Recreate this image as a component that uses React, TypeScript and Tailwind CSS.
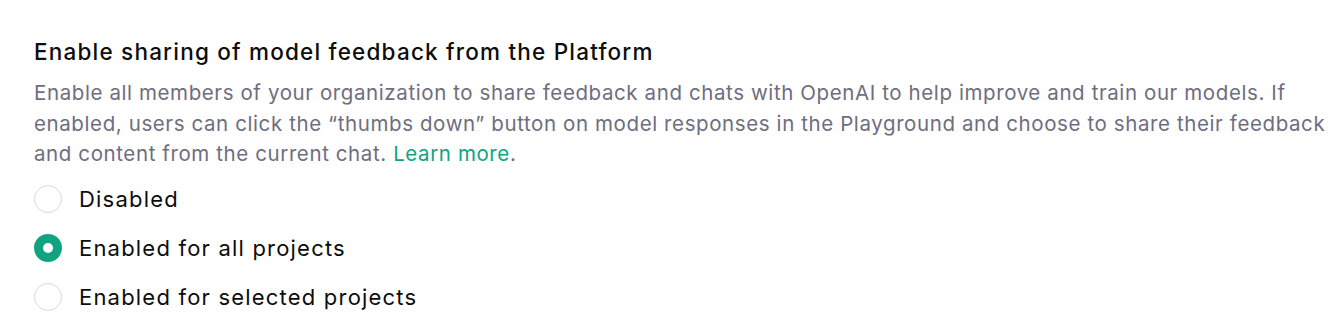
import React from "react";

function Radio({ checked, label }: { checked?: boolean; label: string }) {
  return (
    <label className="flex items-center gap-[17px] h-[49px]">
      {checked ? (
        <span className="w-[28px] h-[28px] rounded-full bg-[#10a37f] flex items-center justify-center">
          <span className="w-[10px] h-[10px] rounded-full bg-white" />
        </span>
      ) : (
        <span className="w-[28px] h-[28px] rounded-full border-[1.5px] border-[#d9d9e3] bg-white" />
      )}
      <span className="text-[22px] tracking-[1.2px] text-[#0d0d0d]">{label}</span>
    </label>
  );
}

export default function App() {
  return (
    <div className="w-[1344px] h-[335px] bg-white pl-[34px] pt-[35px]" style={{ fontFamily: "Inter, 'Noto Sans', sans-serif" }}>
      <div className="w-[1300px]">
        <h2 className="text-[22.5px] font-medium text-[#0d0d0d] leading-[34px] tracking-[1.2px]">
          Enable sharing of model feedback from the Platform
        </h2>
        <p className="text-[20.5px] leading-[30.5px] tracking-[0.6px] text-[#6e6e80] mt-[9px]">
          Enable all members of your organization to share feedback and chats with OpenAI to help improve and train our models. If enabled, users can click the “thumbs down” button on model responses in the Playground and choose to share their feedback and content from the current chat.{" "}
          <a className="text-[#10a37f]">Learn more</a>.
        </p>
        <div className="mt-[5px] flex flex-col">
          <Radio label="Disabled" />
          <Radio checked label="Enabled for all projects" />
          <Radio label="Enabled for selected projects" />
        </div>
      </div>
    </div>
  );
}
